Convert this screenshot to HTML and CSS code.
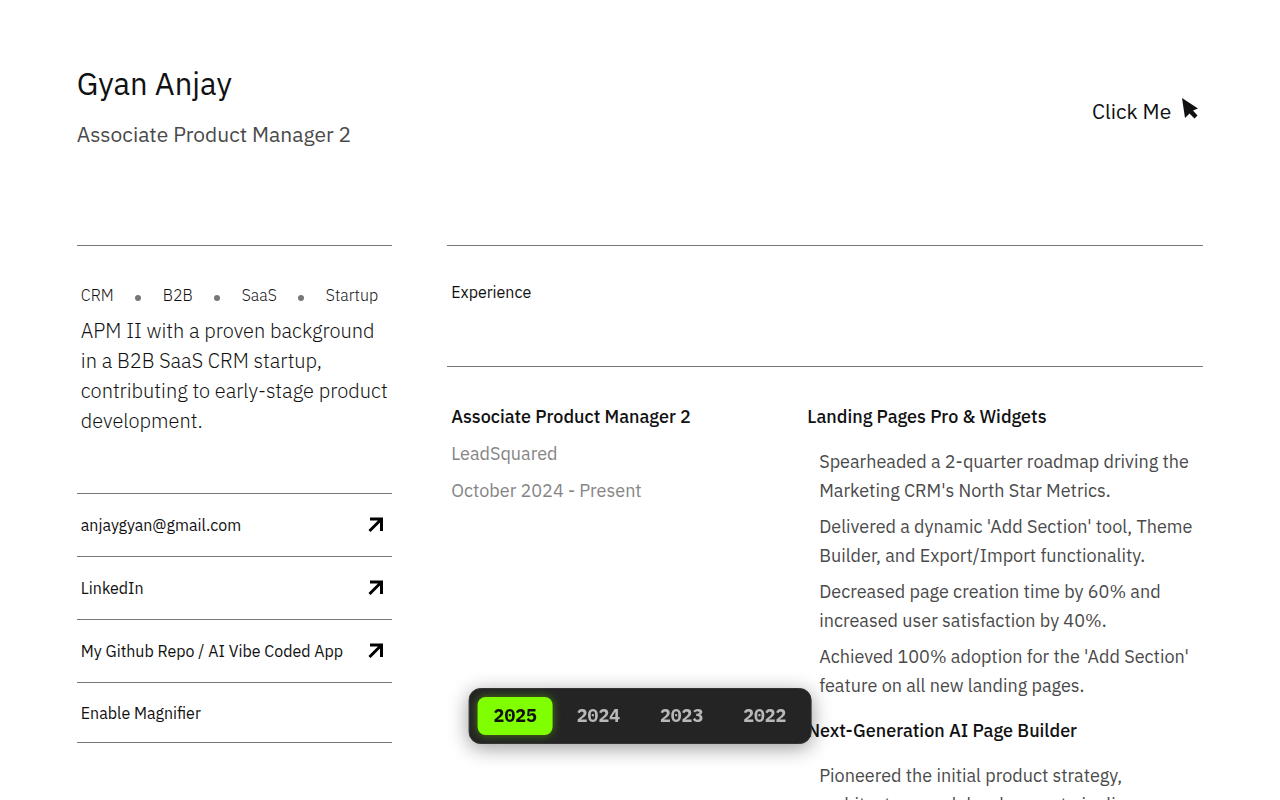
FILE: index.html
```html
<!DOCTYPE html>
<html lang="en">

<head>
    <meta charset="UTF-8">
    <meta name="viewport" content="width=device-width, initial-scale=1.0">
    <title>Gyan Anjay</title>
    <link rel="stylesheet" href="styles.css">
</head>

<body>
    <header class="header">
        <div>
            <h1 class="name">Gyan Anjay</h1>
            <p class="role">Associate Product Manager 2</p>
        </div>
        <button type="button" class="click-me">
            Click Me
            <svg class="cursor-icon" viewBox="0 0 18 22" aria-hidden="true">
                <path d="M1 0 L17 10.5 L12 12.5 L16.5 17.5 L13.5 20.5 L8.5 15.5 L4 20 Z" />
            </svg>
        </button>
    </header>

    <main class="layout">
        <aside class="sidebar">
            <section class="about">
                <ul class="tags">
                    <li>CRM</li>
                    <li>B2B</li>
                    <li>SaaS</li>
                    <li>Startup</li>
                </ul>
                <p class="summary">APM II with a proven background in a B2B SaaS CRM startup, contributing to early-stage product development.</p>
            </section>

            <nav class="links">
                <a class="link-row" href="mailto:anjaygyan@gmail.com">
                    anjaygyan@gmail.com
                    <svg class="arrow-icon" viewBox="0 0 16 16" aria-hidden="true"><path d="M2 2 H13.5 V14 M13.5 2 L1.5 14" /></svg>
                </a>
                <a class="link-row" href="#">
                    LinkedIn
                    <svg class="arrow-icon" viewBox="0 0 16 16" aria-hidden="true"><path d="M2 2 H13.5 V14 M13.5 2 L1.5 14" /></svg>
                </a>
                <a class="link-row" href="#">
                    My Github Repo / AI Vibe Coded App
                    <svg class="arrow-icon" viewBox="0 0 16 16" aria-hidden="true"><path d="M2 2 H13.5 V14 M13.5 2 L1.5 14" /></svg>
                </a>
                <button type="button" class="link-row magnifier">Enable Magnifier</button>
            </nav>
        </aside>

        <section class="experience">
            <h2 class="section-title">Experience</h2>
            <div class="job">
                <div class="job-info">
                    <h3 class="job-title">Associate Product Manager 2</h3>
                    <p class="job-meta">LeadSquared</p>
                    <p class="job-meta">October 2024 - Present</p>
                </div>
                <div class="job-details">
                    <h3 class="job-title">Landing Pages Pro &amp; Widgets</h3>
                    <ul class="points">
                        <li>Spearheaded a 2-quarter roadmap driving the Marketing CRM's North Star Metrics.</li>
                        <li>Delivered a dynamic 'Add Section' tool, Theme Builder, and Export/Import functionality.</li>
                        <li>Decreased page creation time by 60% and increased user satisfaction by 40%.</li>
                        <li>Achieved 100% adoption for the 'Add Section' feature on all new landing pages.</li>
                    </ul>
                    <h3 class="job-title">Next-Generation AI Page Builder</h3>
                    <ul class="points">
                        <li>Pioneered the initial product strategy, architecture, and development pipeline.</li>
                    </ul>
                </div>
            </div>
        </section>
    </main>

    <nav class="years" aria-label="Year">
        <button type="button" class="year active">2025</button>
        <button type="button" class="year">2024</button>
        <button type="button" class="year">2023</button>
        <button type="button" class="year">2022</button>
    </nav>
</body>

</html>
```
FILE: styles.css
```css
:root {
    --text: #111111;
    --muted: #4a4a4a;
    --light: #858585;
    --line: #777777;
    --accent: #7fff00;
}

* {
    box-sizing: border-box;
}

body {
    margin: 0;
    padding: 0 6%;
    font-family: "IBM Plex Sans", Roboto, sans-serif;
    font-size: 16px;
    line-height: 24px;
    color: var(--text);
    background-color: #ffffff;
}

h1, h2, h3, p, ul {
    margin: 0;
    padding: 0;
    font-weight: 400;
}

ul {
    list-style: none;
}

button {
    border: 0;
    background: none;
    font-family: inherit;
    color: inherit;
    cursor: pointer;
}

.header {
    display: flex;
    justify-content: space-between;
    align-items: center;
    padding: 64px 0 95px;
}

.name {
    font-size: 31px;
    line-height: 40px;
    margin-bottom: 14px;
}

.role {
    font-size: 21px;
    line-height: 32px;
    color: var(--muted);
}

.click-me {
    display: flex;
    align-items: center;
    gap: 10px;
    padding: 12px 4px 4px;
    font-size: 21px;
    line-height: 32px;
}

.cursor-icon {
    width: 18px;
    height: 22px;
    margin-bottom: 4px;
    fill: var(--text);
}

.layout {
    display: grid;
    grid-template-columns: 28% 1fr;
    column-gap: 55px;
    align-items: start;
}

.about {
    border-top: 1px solid var(--line);
    padding: 37px 0 57px 4px;
}

.tags {
    display: flex;
    justify-content: space-between;
    align-items: center;
    padding-right: 14px;
    margin-bottom: 9px;
    font-weight: 300;
}

.tags li {
    display: contents;
}

.tags li + li::before {
    content: "";
    width: 6px;
    height: 6px;
    margin-top: 6px;
    border-radius: 50%;
    background-color: #777777;
}

.summary {
    font-size: 20px;
    line-height: 30px;
    font-weight: 300;
}

.link-row {
    display: flex;
    justify-content: space-between;
    align-items: center;
    width: 100%;
    min-height: 63px;
    padding: 0 8px 0 4px;
    border-top: 1px solid var(--line);
    font-size: 16px;
    line-height: 24px;
    color: var(--text);
    text-decoration: none;
}

.magnifier {
    min-height: 61px;
    border-bottom: 1px solid var(--line);
}

.arrow-icon {
    width: 16px;
    height: 16px;
    fill: none;
    stroke: #000000;
    stroke-width: 3;
}

.section-title {
    padding: 34px 4px 62px;
    border-top: 1px solid var(--line);
    border-bottom: 1px solid var(--line);
    font-size: 16px;
    line-height: 24px;
}

.job {
    display: grid;
    grid-template-columns: 356fr 396fr;
    padding: 35px 0 0 4px;
}

.job-title {
    font-size: 18px;
    line-height: 29px;
    font-weight: 500;
}

.job-meta {
    margin-top: 8px;
    font-size: 18px;
    line-height: 29px;
    color: var(--light);
}

.points {
    padding: 16px 0 16px 12px;
    font-size: 18px;
    line-height: 29px;
    color: var(--muted);
}

.points li + li {
    margin-top: 7px;
}

.years {
    position: fixed;
    bottom: 56px;
    left: 50%;
    transform: translateX(-50%);
    display: flex;
    gap: 8px;
    padding: 8px;
    border: 1px solid #333333;
    border-radius: 12px;
    background-color: #242424;
    box-shadow: 0 4px 20px rgba(0, 0, 0, 0.4);
}

.year {
    padding: 7px 16px;
    border-radius: 8px;
    font-family: "IBM Plex Mono", "Liberation Mono", monospace;
    font-size: 18px;
    line-height: 24px;
    font-weight: 700;
    color: #b8b8b8;
}

.year.active {
    color: #111111;
    background-color: var(--accent);
    box-shadow: 0 0 10px rgba(127, 255, 0, 0.4);
}
```
